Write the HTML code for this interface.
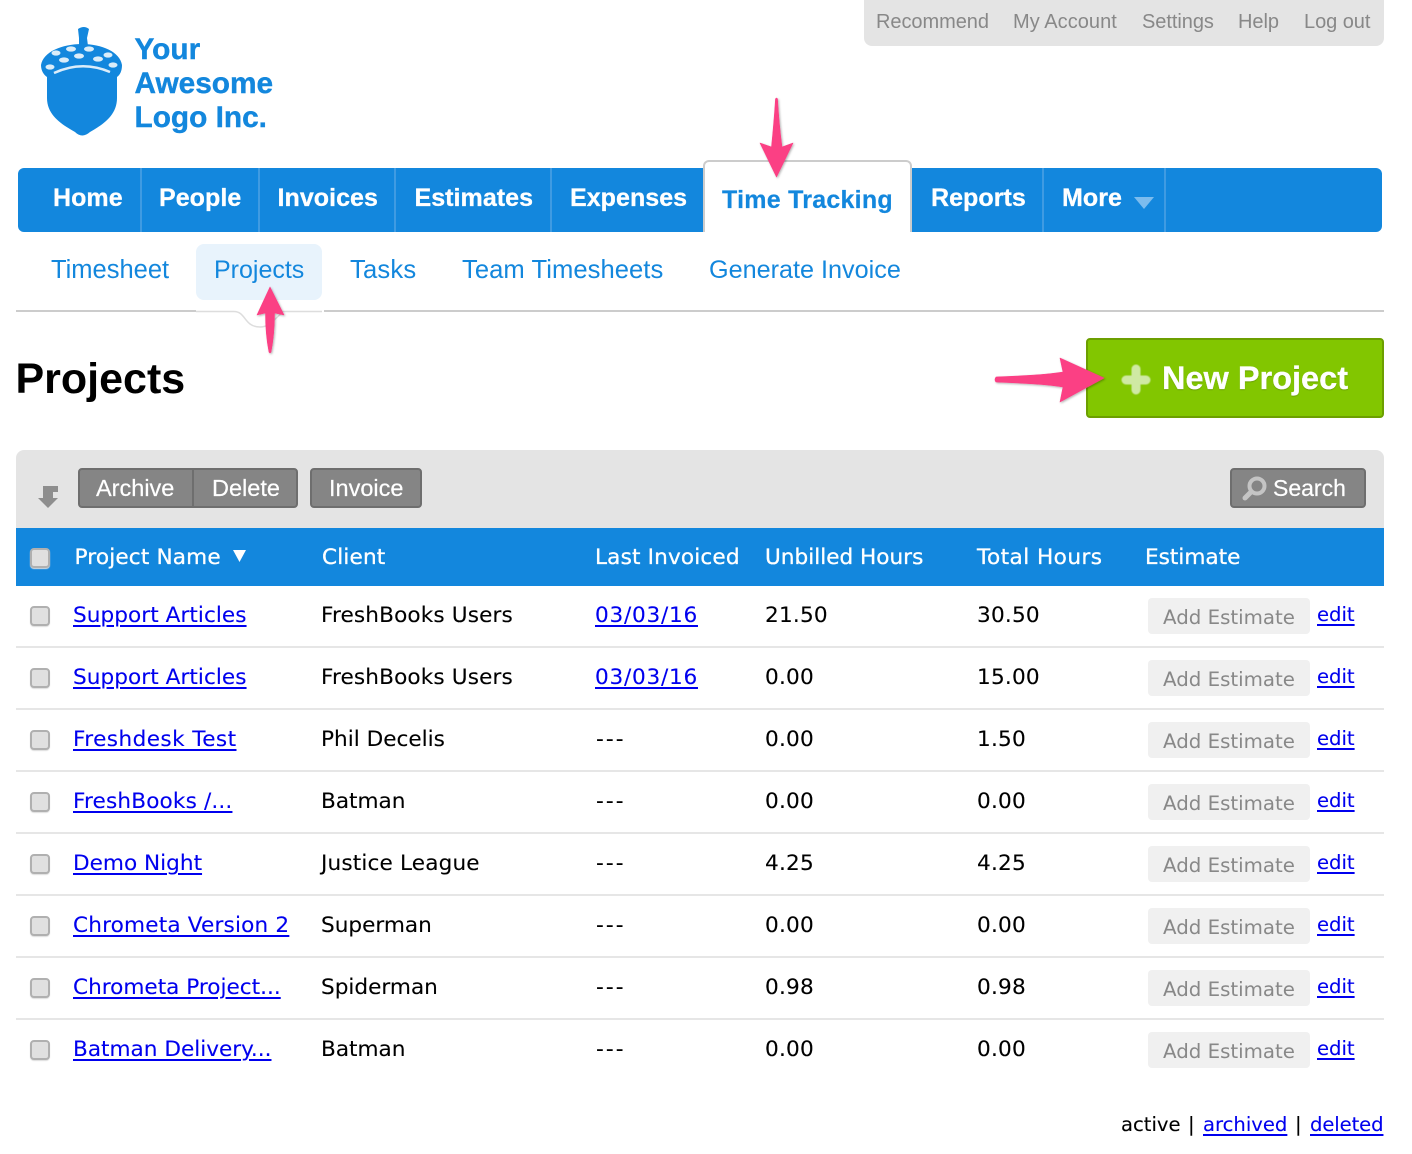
<!DOCTYPE html>
<html><head><meta charset="utf-8"><style>
html,body{margin:0;padding:0;background:#fff}
body{width:1412px;height:1154px;position:relative;overflow:hidden;font-family:"Liberation Sans",Arial,sans-serif}
div,a,span.t{position:absolute;white-space:nowrap}
.top{font-size:20px;color:#888;top:9px;line-height:26px;letter-spacing:-.05px}
.nav{font-size:25px;font-weight:bold;color:#fff;top:182px;line-height:32px;letter-spacing:.05px;-webkit-text-stroke:.3px #fff}
.sep{top:168px;width:2px;height:64px;background:#3f9be2}
.sub{font-size:25.6px;color:#1387dd;top:255px;line-height:30px}
.btn{background:#858585;border:2px solid #6e6e6e;box-sizing:border-box;border-radius:4px;height:40px;top:468px}
.bt{font-size:23.5px;color:#fff;top:473px;line-height:30px;-webkit-text-stroke:.2px #fff}
.d{font-family:"DejaVu Sans",Verdana,sans-serif;font-size:21.6px;line-height:30px;color:#000;-webkit-text-stroke:.1px}
.h{color:#fff;top:543px;letter-spacing:.15px;-webkit-text-stroke:.3px #fff}
a.d{color:#00e;text-decoration:underline;text-decoration-thickness:2px;text-underline-offset:3px}
a.e,.f{font-size:19.6px}
.dt{letter-spacing:.75px}
.n{letter-spacing:.2px}
.x{letter-spacing:2.1px;margin-left:1px}
.cb{left:30px;width:20px;height:20px;box-sizing:border-box;background:#e0e0e0;border:2px solid #b0b0b0;border-radius:4px;box-shadow:0 1px 1px #ddd}
.line{left:16px;width:1368px;height:2px;background:#e6e6e6}
.ae{left:1148px;width:162px;height:36px;background:#f0f0f0;border-radius:4px;text-align:center;color:#888;line-height:39px;font-family:"DejaVu Sans",Verdana,sans-serif;font-size:19.8px}
</style></head><body>

<svg style="position:absolute;left:0;top:0" width="300" height="160">
<g fill="#1387dd">
<path d="M78 29 Q84 25 89 29 L87 38 L88 46 L79 46 L79 38 Z"/>
<path d="M41 65 C43 52 62 44 82 44 C102 44 120 52 122 65 C122 71 120 75 117 77 L117 98 C117 116 102 125 90 132 Q82 139 75 132 C63 125 47 116 47 98 L47 77 C44 75 41 71 41 65 Z"/>
</g>
<g fill="#fff" opacity=".85">
<ellipse cx="71" cy="49" rx="5" ry="2.600"/><ellipse cx="89" cy="49" rx="5" ry="2.600"/>
<ellipse cx="56" cy="53" rx="4.500" ry="2.600"/><ellipse cx="79" cy="56" rx="5" ry="2.600"/><ellipse cx="108" cy="55" rx="4.500" ry="2.600"/>
<ellipse cx="64" cy="60" rx="5" ry="2.600"/><ellipse cx="98" cy="59" rx="5" ry="2.600"/>
<ellipse cx="50" cy="67" rx="4.500" ry="2.600"/><ellipse cx="113" cy="65" rx="4.500" ry="2.600"/>
</g>
<path d="M54 73 Q82 60 110 72" fill="none" stroke="#fff" stroke-width="2.400" opacity=".85"/>
</svg>
<div style="left:134.500px;top:33px;font-size:29.800px;font-weight:bold;color:#1387dd;line-height:34px;filter:blur(.35px);-webkit-text-stroke:.4px #1387dd">Your<br>Awesome<br>Logo Inc.</div>

<div style="left:864px;top:0;width:520px;height:46px;background:#e4e4e4;border-radius:0 0 8px 8px"></div>
<span class="t top" style="left:876px">Recommend</span>
<span class="t top" style="left:1013px;letter-spacing:.05px">My Account</span>
<span class="t top" style="left:1142px">Settings</span>
<span class="t top" style="left:1238px">Help</span>
<span class="t top" style="left:1304px">Log out</span>

<div style="left:18px;top:168px;width:1364px;height:64px;background:#1387dd;border-radius:6px"></div>
<div class="sep" style="left:140px"></div><div class="sep" style="left:258px"></div><div class="sep" style="left:394px"></div><div class="sep" style="left:550px"></div><div class="sep" style="left:1042px"></div><div class="sep" style="left:1164px"></div>
<span class="t nav" style="left:53px">Home</span>
<span class="t nav" style="left:159px">People</span>
<span class="t nav" style="left:277.500px">Invoices</span>
<span class="t nav" style="left:414.500px">Estimates</span>
<span class="t nav" style="left:570px">Expenses</span>
<div style="left:703px;top:160px;width:209px;height:72px;box-sizing:border-box;background:#fff;border:2px solid #ccc;border-bottom:0;border-radius:6px 6px 0 0"></div>
<span class="t nav" style="left:722px;top:184px;color:#1387dd;-webkit-text-stroke:.2px #1387dd;letter-spacing:.25px">Time Tracking</span>
<span class="t nav" style="left:931px">Reports</span>
<span class="t nav" style="left:1062px">More</span>
<svg style="position:absolute;left:1133px;top:196px" width="22" height="14"><path d="M1 1H21L11 13Z" fill="#7cbcee"/></svg>

<div style="left:16px;top:310px;width:1368px;height:2px;background:#ccc"></div>
<div style="left:196px;top:244px;width:126px;height:56px;background:#e8f3fc;border-radius:8px"></div>
<svg style="position:absolute;left:190px;top:305px" width="140" height="25"><path d="M6 5V7H44C56 7 54 22 70 22C88 22 84 7 100 7H134V5Z" fill="#fff"/><path d="M6 6.500H44C56 6.500 54 22 70 22C80 22 84 14 92 8M92 6.500H132" fill="none" stroke="#ddd" stroke-width="1.500"/></svg>
<span class="t sub" style="left:51px;font-size:25.500px">Timesheet</span>
<span class="t sub" style="left:214px;font-size:25px">Projects</span>
<span class="t sub" style="left:350px;letter-spacing:.2px">Tasks</span>
<span class="t sub" style="left:462px;letter-spacing:.05px">Team Timesheets</span>
<span class="t sub" style="left:709px;font-size:25.200px">Generate Invoice</span>

<div style="left:15.500px;top:354px;font-size:43px;font-weight:bold;line-height:50px;color:#000">Projects</div>

<div style="left:1086px;top:338px;width:298px;height:80px;box-sizing:border-box;background:#82c600;border:2px solid #6c9f00;border-radius:4px"></div>
<svg style="position:absolute;left:1120px;top:364px" width="32" height="32"><path d="M16 5V26M6 16H26" stroke="#cfe9a3" stroke-width="9" stroke-linecap="round" style="filter:blur(.5px)"/></svg>
<div style="left:1162px;top:358px;font-size:32.500px;font-weight:bold;color:#fff;line-height:40px;text-shadow:0 1px 1px rgba(60,90,0,.4);-webkit-text-stroke:.3px #fff">New Project</div>

<div style="left:16px;top:450px;width:1368px;height:80px;background:#e4e4e4;border-radius:8px 8px 0 0"></div>
<svg style="position:absolute;left:36px;top:485px" width="24" height="26"><path d="M7 1H22V7H17V13H22L12 23L2 13H7Z" fill="#8e8e8e"/></svg>
<div class="btn" style="left:78px;width:220px"></div>
<div style="left:192px;top:470px;width:2px;height:36px;background:#6e6e6e"></div>
<div class="btn" style="left:310px;width:112px"></div>
<div class="btn" style="left:1230px;width:136px"></div>
<span class="t bt" style="left:96px">Archive</span>
<span class="t bt" style="left:212px">Delete</span>
<span class="t bt" style="left:329px">Invoice</span>
<svg style="position:absolute;left:1241px;top:475px" width="28" height="28"><circle cx="16" cy="11" r="7.500" fill="none" stroke="#c4c4c4" stroke-width="4"/><path d="M10 17L4 23" stroke="#c4c4c4" stroke-width="5" stroke-linecap="round"/></svg>
<span class="t bt" style="left:1273px;font-size:23px">Search</span>

<div style="left:16px;top:528px;width:1368px;height:58px;background:#1387dd"></div>
<div class="cb" style="top:548px"></div>
<span class="t d h" style="left:74.500px">Project Name</span>
<svg style="position:absolute;left:232px;top:549px" width="15" height="14"><path d="M1 1H14L7.500 13Z" fill="#fff"/></svg>
<span class="t d h" style="left:322px">Client</span>
<span class="t d h" style="left:595px">Last Invoiced</span>
<span class="t d h" style="left:765px;letter-spacing:0">Unbilled Hours</span>
<span class="t d h" style="left:977px;letter-spacing:.45px">Total Hours</span>
<span class="t d h" style="left:1145px;letter-spacing:0">Estimate</span>

<div class="cb" style="top:606px"></div><a class="d" style="left:73px;top:601px;letter-spacing:.05px">Support Articles</a><span class="t d" style="left:321px;top:601px;letter-spacing:.13px">FreshBooks Users</span><a class="d dt" style="left:595px;top:601px">03/03/16</a><span class="t d n" style="left:765px;top:601px">21.50</span><span class="t d n" style="left:977px;top:601px">30.50</span><div class="ae" style="top:598px">Add Estimate</div><a class="d e" style="left:1317px;top:600px">edit</a><div class="line" style="top:646px"></div>

<div class="cb" style="top:668px"></div><a class="d" style="left:73px;top:663px;letter-spacing:.05px">Support Articles</a><span class="t d" style="left:321px;top:663px;letter-spacing:.13px">FreshBooks Users</span><a class="d dt" style="left:595px;top:663px">03/03/16</a><span class="t d n" style="left:765px;top:663px">0.00</span><span class="t d n" style="left:977px;top:663px">15.00</span><div class="ae" style="top:660px">Add Estimate</div><a class="d e" style="left:1317px;top:662px">edit</a><div class="line" style="top:708px"></div>

<div class="cb" style="top:730px"></div><a class="d" style="left:73px;top:725px;letter-spacing:.42px">Freshdesk Test</a><span class="t d" style="left:321px;top:725px">Phil Decelis</span><span class="t d x" style="left:595px;top:725px">---</span><span class="t d n" style="left:765px;top:725px">0.00</span><span class="t d n" style="left:977px;top:725px">1.50</span><div class="ae" style="top:722px">Add Estimate</div><a class="d e" style="left:1317px;top:724px">edit</a><div class="line" style="top:770px"></div>

<div class="cb" style="top:792px"></div><a class="d" style="left:73px;top:787px;letter-spacing:.15px">FreshBooks /...</a><span class="t d" style="left:321px;top:787px">Batman</span><span class="t d x" style="left:595px;top:787px">---</span><span class="t d n" style="left:765px;top:787px">0.00</span><span class="t d n" style="left:977px;top:787px">0.00</span><div class="ae" style="top:784px">Add Estimate</div><a class="d e" style="left:1317px;top:786px">edit</a><div class="line" style="top:832px"></div>

<div class="cb" style="top:854px"></div><a class="d" style="left:73px;top:849px">Demo Night</a><span class="t d" style="left:321px;top:849px;letter-spacing:.15px">Justice League</span><span class="t d x" style="left:595px;top:849px">---</span><span class="t d n" style="left:765px;top:849px">4.25</span><span class="t d n" style="left:977px;top:849px">4.25</span><div class="ae" style="top:846px">Add Estimate</div><a class="d e" style="left:1317px;top:848px">edit</a><div class="line" style="top:894px"></div>

<div class="cb" style="top:916px"></div><a class="d" style="left:73px;top:911px;letter-spacing:.17px">Chrometa Version 2</a><span class="t d" style="left:321px;top:911px">Superman</span><span class="t d x" style="left:595px;top:911px">---</span><span class="t d n" style="left:765px;top:911px">0.00</span><span class="t d n" style="left:977px;top:911px">0.00</span><div class="ae" style="top:908px">Add Estimate</div><a class="d e" style="left:1317px;top:910px">edit</a><div class="line" style="top:956px"></div>

<div class="cb" style="top:978px"></div><a class="d" style="left:73px;top:973px">Chrometa Project...</a><span class="t d" style="left:321px;top:973px">Spiderman</span><span class="t d x" style="left:595px;top:973px">---</span><span class="t d n" style="left:765px;top:973px">0.98</span><span class="t d n" style="left:977px;top:973px">0.98</span><div class="ae" style="top:970px">Add Estimate</div><a class="d e" style="left:1317px;top:972px">edit</a><div class="line" style="top:1018px"></div>

<div class="cb" style="top:1040px"></div><a class="d" style="left:73px;top:1035px">Batman Delivery...</a><span class="t d" style="left:321px;top:1035px">Batman</span><span class="t d x" style="left:595px;top:1035px">---</span><span class="t d n" style="left:765px;top:1035px">0.00</span><span class="t d n" style="left:977px;top:1035px">0.00</span><div class="ae" style="top:1032px">Add Estimate</div><a class="d e" style="left:1317px;top:1034px">edit</a>

<span class="t d f" style="left:1121px;top:1110px">active</span>
<span class="t d f" style="left:1188px;top:1110px">|</span>
<a class="d e" style="left:1203px;top:1110px">archived</a>
<span class="t d f" style="left:1295px;top:1110px">|</span>
<a class="d e" style="left:1310px;top:1110px;letter-spacing:-.1px">deleted</a>

<svg style="position:absolute;left:0;top:0;pointer-events:none" width="1412" height="1154">
<defs><filter id="s" x="-30%" y="-30%" width="160%" height="160%"><feDropShadow dx="1" dy="1" stdDeviation="1" flood-color="#000" flood-opacity=".3"/></filter></defs>
<g fill="#fb3f84" filter="url(#s)" stroke="#fb3f84" stroke-width=".6" stroke-linejoin="round">
<path d="M775.500 99Q776.500 97 777.500 99C778.500 115 780 132 782 147L793 143L776.500 177L760 143L771.500 147C773 132 774.500 115 775.500 99Z"/>
<path d="M270 287L257 315L265.500 313C265.500 328 267 342 269 352Q270 354 271 352C273 342 274.500 328 274.500 313L284 315Z"/>
<path d="M996 377C1020 376 1045 375 1063 372L1060 358L1104 378L1060 402L1063 387C1045 384 1020 383 996 382Q994 380 996 377Z"/>
</g></svg>
</body></html>
